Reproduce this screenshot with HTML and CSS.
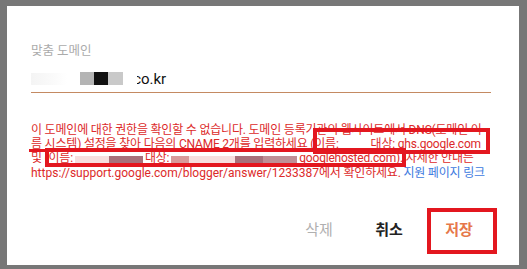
FILE: index.html
```html
<!DOCTYPE html>
<html lang="ko">
<head>
  <meta charset="UTF-8">
  <title>맞춤 도메인</title>
  <link rel="stylesheet" href="styles.css">
</head>
<body>
  <div class="dialog">
    <div class="field">
      <label class="field-label">맞춤 도메인</label>
      <div class="field-input">
        <span class="smudge"></span><span class="blk b1"></span><span class="blk b2"></span><span class="blk b3"></span><span class="cut">c</span>o.kr
      </div>
    </div>

    <p class="error">
      이 도메인에 대한 권한을 확인할 수 없습니다. 도메인 등록기관의 웹사이트에서 DNS(도메인 이름 시스템) 설정을 찾아 다음의 CNAME 2개를 입력하세요 (이름:<span class="gap"></span>대상: ghs.google.com 및 (이름:<span class="bars"><span class="bar pale"></span><span class="bar mauve"></span></span>대상:<span class="bars"><span class="bar pink"></span><span class="bar pale w2"></span><span class="bar mauve w3"></span><span class="bar grey"></span></span>googlehosted.com). 자세한 안내는 <span class="url">https://support.google.com/blogger/answer/1233387</span>에서 확인하세요. <a href="#" class="help">지원 페이지 링크</a>
    </p>

    <div class="actions">
      <button type="button" class="btn btn-muted">삭제</button>
      <button type="button" class="btn btn-dark">취소</button>
      <button type="button" class="btn btn-save">저장</button>
    </div>

    <!-- 빨간 표시 (스크린샷 위에 그린 강조 박스) -->
    <div class="mark mark-1"></div>
    <div class="mark mark-2"></div>
    <div class="mark-line"></div>
    <div class="mark mark-save"></div>
  </div>
</body>
</html>
```

FILE: styles.css
```css
/* 기본 */
body {
  margin: 0;
  padding: 0;
  background-color: #777777;
  font-family: Roboto, "Noto Sans CJK KR", sans-serif;
}
.dialog {
  position: relative;
  box-sizing: border-box;
  width: 512px;
  height: 259px;
  margin: 6px 0 0 7px;
  padding: 37px 28px 0 24px;
  background-color: #ffffff;
}

/* 입력 필드 */
.field-label {
  display: block;
  font-size: 12.5px;
  line-height: 16px;
  color: #ababab;
}
.field-input {
  height: 20px;
  margin-top: 10px;
  padding-bottom: 3px;
  border-bottom: 1px solid #c48a62;
  font-size: 15px;
  line-height: 20px;
  color: #111;
}
.smudge {
  display: inline-block;
  width: 36px;
  height: 12px;
  margin-right: 13px;
  background: linear-gradient(90deg, #f4f4f4, #fafafa 60%, #ffffff);
  vertical-align: -1px;
}
.blk {
  display: inline-block;
  height: 13px;
  vertical-align: -1px;
}
.b1 { width: 14px; background-color: #b4b4b4; }
.b2 { width: 14px; background-color: #111111; }
.b3 { width: 15px; background-color: #c9c9c9; margin-right: 14px; }
.cut {
  display: inline-block;
  width: 4px;
  overflow: hidden;
  direction: rtl;
  vertical-align: top;
}

/* 오류 문구 */
.error {
  margin: 30px 0 0 0;
  font-size: 12px;
  line-height: 14px;
  letter-spacing: -0.2px;
  color: #dc2a2a;
}
.url {
  letter-spacing: 0;
}
.gap {
  display: inline-block;
  width: 32px;
}
.bars {
  display: inline-block;
  margin: 0 2px;
  vertical-align: -1px;
}
.bar {
  display: inline-block;
  height: 7px;
  width: 34px;
}
.pale { background-color: #f7dede; }
.mauve { background-color: #a8707a; }
.pink { background-color: #d99a9a; width: 18px; }
.grey { background-color: #bf8f95; width: 34px; }
.w2 { width: 46px; }
.w3 { width: 28px; }
.help {
  color: #3d7ae0;
  text-decoration: none;
}

/* 버튼 */
.actions {
  display: flex;
  justify-content: flex-end;
  gap: 6px;
  margin-top: 40px;
}
.btn {
  width: 64px;
  padding: 0;
  border: none;
  background: none;
  text-align: center;
  font-family: Roboto, "Noto Sans CJK KR", sans-serif;
  font-size: 15px;
  line-height: 20px;
  font-weight: bold;
  cursor: pointer;
}
.btn-muted { color: #b0b0b0; font-weight: normal; }
.btn-dark { color: #222222; }
.btn-save { color: #e6784a; }

/* 강조 박스 */
.mark {
  position: absolute;
  border: 4px solid #e3171f;
}
.mark-1 {
  left: 306px;
  top: 122px;
  width: 169px;
  height: 18px;
}
.mark-2 {
  left: 38px;
  top: 142px;
  width: 353px;
  height: 11px;
}
.mark-line {
  position: absolute;
  left: 22px;
  top: 143px;
  width: 20px;
  height: 3px;
  background-color: #e3171f;
}
.mark-save {
  left: 420px;
  top: 202px;
  width: 62px;
  height: 38px;
}
```
